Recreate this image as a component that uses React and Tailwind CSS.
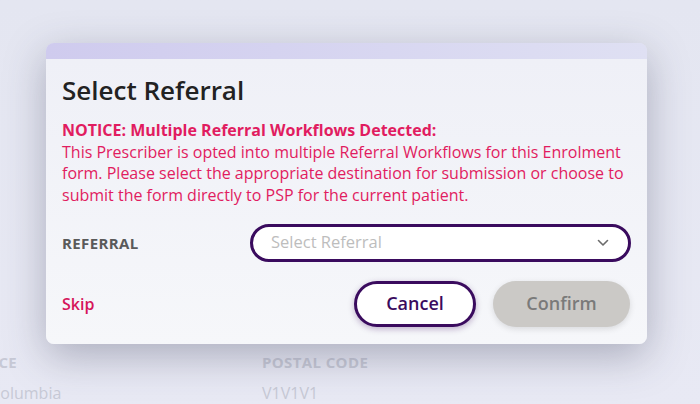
import React from 'react';

function Chevron() {
  return (
    <svg width="12" height="8" viewBox="0 0 12 8" fill="none">
      <path d="M1.5 1.5 L6 6 L10.5 1.5" stroke="#6b6b6b" strokeWidth="1.6" strokeLinecap="round" strokeLinejoin="round" />
    </svg>
  );
}

export default function App() {
  return (
    <div
      className="relative w-[700px] h-[404px] overflow-hidden bg-gradient-to-b from-[#e4e6f1] to-[#e8e9f4]"
      style={{ fontFamily: '"Open Sans", "Noto Sans", sans-serif' }}
    >
      {/* page behind the overlay */}
      <div className="pt-[350px] flex gap-[124px] -ml-[62px] text-[#c7c9d6]">
        <div className="w-[200px] flex flex-col">
          <span className="text-[15px] font-bold tracking-wide leading-6">PROVINCE</span>
          <span className="text-[16px] leading-6 mt-[7px]">British Columbia</span>
        </div>
        <div className="flex flex-col">
          <span className="text-[15px] font-bold tracking-wide leading-6">POSTAL CODE</span>
          <span className="text-[16px] leading-6 mt-[7px]">V1V1V1</span>
        </div>
      </div>

      {/* modal */}
      <div className="absolute left-[46px] top-[43px] w-[601px] h-[301px] rounded-[8px] overflow-hidden shadow-[0_12px_40px_rgba(60,62,90,0.35)] flex flex-col">
        <div className="h-[16px] bg-gradient-to-r from-[#cfcbee] to-[#dfe0f3]" />
        <div className="flex-1 bg-gradient-to-b from-[#eff0f7] to-[#f6f7fa] px-4 pt-[14px]">
          <h2 className="text-[26px] leading-[34px] font-semibold text-[#222]">Select Referral</h2>
          <div className="mt-[13px] text-[16px] leading-[21.7px] text-[#e11c60]">
            <p className="font-bold">NOTICE: Multiple Referral Workflows Detected:</p>
            <p>
              This Prescriber is opted into multiple Referral Workflows for this Enrolment form. Please select the appropriate destination for submission or choose to submit the form directly to PSP for the current patient.
            </p>
          </div>
          <div className="mt-[17px] flex items-center">
            <span className="w-[188px] text-[15px] font-bold tracking-wide text-[#5a5a5a]">REFERRAL</span>
            <div className="flex-1 h-[38px] rounded-full border-[3px] border-[#3a0b5e] bg-white flex items-center justify-between pl-[18px] pr-[19px]">
              <span className="text-[16.5px] text-[#bdbdbd]">Select Referral</span>
              <Chevron />
            </div>
          </div>
          <div className="mt-[19px] flex items-center">
            <span className="text-[16px] font-semibold text-[#d5155b]">Skip</span>
            <div className="ml-auto flex gap-[17px] pr-px">
              <button className="w-[122px] h-[46px] rounded-full border-[3px] border-[#3a0b5e] bg-white text-[18px] font-semibold text-[#3a0b5e] shadow-[0_2px_6px_rgba(58,11,94,0.3)]">
                Cancel
              </button>
              <button className="w-[137px] h-[46px] rounded-full bg-[#cbc9c6] text-[18px] font-semibold text-[#7a7a7a] shadow-[0_2px_6px_rgba(0,0,0,0.12)]">
                Confirm
              </button>
            </div>
          </div>
        </div>
      </div>
    </div>
  );
}
